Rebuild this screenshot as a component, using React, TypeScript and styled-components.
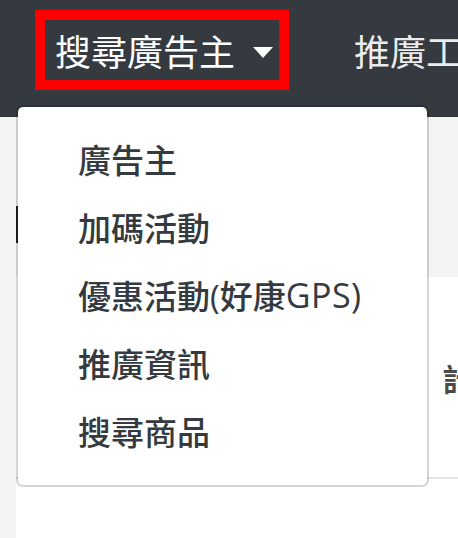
import React from "react";
import styled, { createGlobalStyle } from "styled-components";

const GlobalStyle = createGlobalStyle`
  html, body {
    margin: 0;
    padding: 0;
    height: 100%;
    overflow: hidden;
    background-color: #f3f3f3;
    font-family: "Open Sans", "Noto Sans CJK TC", sans-serif;
  }
  #root {
    height: 100%;
  }
`;

const Page = styled.div`
  display: flex;
  flex-direction: column;
  height: 100vh;
`;

const Navbar = styled.nav`
  display: flex;
  align-items: flex-start;
  box-sizing: border-box;
  height: 117px;
  padding: 10px 0 0 35px;
  background-color: #343a40;
  flex-shrink: 0;
`;

const NavItem = styled.div`
  position: relative;
`;

type NavLinkProps = {
  $highlight?: boolean;
};
const NavLink = styled.a<NavLinkProps>`
  display: flex;
  align-items: center;
  box-sizing: border-box;
  height: 80px;
  padding: 0 6px 0 10px;
  border: 10px solid ${({ $highlight }) => ($highlight ? "#ff0000" : "transparent")};
  color: ${({ $highlight }) => ($highlight ? "#ffffff" : "rgba(255, 255, 255, 0.92)")};
  font-size: 36px;
  font-weight: 400;
  white-space: nowrap;
  text-decoration: none;
  margin-right: ${({ $highlight }) => ($highlight ? "45px" : "0")};
`;

const Caret = styled.span`
  display: inline-block;
  width: 0;
  height: 0;
  margin-left: 18px;
  margin-top: 4px;
  border-top: 11px solid #ffffff;
  border-left: 10.5px solid transparent;
  border-right: 10.5px solid transparent;
`;

const DropdownMenu = styled.ul`
  position: absolute;
  top: 95px;
  left: -19px;
  z-index: 10;
  box-sizing: border-box;
  width: 413px;
  margin: 0;
  padding: 18px 0 20px;
  list-style: none;
  background-color: #ffffff;
  background-clip: padding-box;
  border: 2px solid rgba(0, 0, 0, 0.16);
  border-radius: 7px;
`;

const DropdownItem = styled.li`
  display: flex;
  align-items: center;
  height: 68px;
  padding-left: 60px;
  color: #343a40;
  font-size: 33px;
  font-weight: 500;
  white-space: nowrap;
`;

const Latin = styled.span`
  font-size: 34px;
  letter-spacing: 0.5px;
`;

const Main = styled.main`
  display: flex;
  flex-direction: column;
  flex: 1;
  padding-left: 16px;
`;

const SectionTitle = styled.h2`
  box-sizing: border-box;
  height: 37px;
  margin: 89px 0 0;
  padding-left: 14px;
  border-left: 4px solid #1f2327;
  color: #343a40;
  font-size: 24px;
  line-height: 37px;
`;

const Card = styled.section`
  flex: 1;
  margin-top: 34px;
  background-color: #ffffff;
`;

const TableHead = styled.div`
  display: grid;
  grid-template-columns: 414px auto;
  align-items: center;
  height: 200px;
  border-bottom: 2px solid #e3e3e3;
`;

const HeadCell = styled.div`
  padding: 0 12px;
  color: #4a4a4a;
  font-size: 31px;
  font-weight: 700;
  white-space: nowrap;
`;

const menuItems = ["廣告主", "加碼活動", "優惠活動(好康GPS)", "推廣資訊", "搜尋商品"];

function renderLabel(label: string) {
  const match = label.match(/^(.*?)([A-Za-z]+\))$/);
  if (!match) return label;
  return (
    <>
      {match[1]}
      <Latin>{match[2]}</Latin>
    </>
  );
}

export default function App() {
  return (
    <>
      <GlobalStyle />
      <Page>
        <Navbar>
          <NavItem>
            <NavLink $highlight>
              搜尋廣告主
              <Caret />
            </NavLink>
            <DropdownMenu>
              {menuItems.map((item) => (
                <DropdownItem key={item}>{renderLabel(item)}</DropdownItem>
              ))}
            </DropdownMenu>
          </NavItem>
          <NavItem>
            <NavLink>推廣工具</NavLink>
          </NavItem>
        </Navbar>
        <Main>
          <SectionTitle>廣告主</SectionTitle>
          <Card>
            <TableHead>
              <HeadCell>編號</HeadCell>
              <HeadCell>計畫名稱</HeadCell>
            </TableHead>
          </Card>
        </Main>
      </Page>
    </>
  );
}
